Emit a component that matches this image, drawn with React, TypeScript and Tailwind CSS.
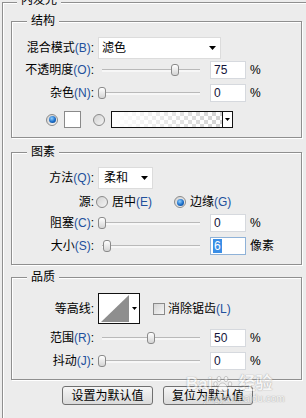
import React from "react";

const M = ({ c }: { c: string }) => <span className="text-[#22509c]">({c})</span>;

function Label({ zh, m }: { zh: string; m?: string }) {
  return (
    <div className="w-[82px] shrink-0 text-right whitespace-nowrap">
      {zh}
      {m && <M c={m} />}:
    </div>
  );
}

function Arrow() {
  return (
    <svg width="7" height="4" viewBox="0 0 7 4" className="shrink-0">
      <polygon points="0,0 7,0 3.5,4" fill="#000" />
    </svg>
  );
}

function Radio({ on }: { on?: boolean }) {
  return (
    <div className="w-[12px] h-[12px] rounded-full border border-[#8a8a8a] bg-[linear-gradient(135deg,#d2d2d2,#f4f4f4)] flex items-center justify-center shrink-0">
      {on && (
        <div className="w-[7px] h-[7px] rounded-full bg-[radial-gradient(circle_at_40%_35%,#8fd0ff,#1a6cc8_55%,#0a3a78)]" />
      )}
    </div>
  );
}

function Slider({ left }: { left: number }) {
  return (
    <div className="relative w-[112px] h-[18px] shrink-0">
      <div className="absolute left-[4px] top-[8px] w-[98px] h-[3px] border-t border-[#b9b9b9] bg-[#f7f7f7]" />
      <div
        className="absolute top-[3px] w-[8px] h-[12px] rounded-[3px] border border-[#8a8a8a] bg-[linear-gradient(#ffffff,#d4d4d4)]"
        style={{ left }}
      />
    </div>
  );
}

function Input({ v, sel }: { v: string; sel?: boolean }) {
  return (
    <div
      className={`w-[36px] h-[18px] shrink-0 bg-white border flex items-center pl-[2px] text-[#14143a] ${
        sel ? "border-[#8fb2d8]" : "border-[#d6d9de]"
      }`}
    >
      {sel ? <span className="bg-[#3a8ee6] text-white px-[1px]">{v}</span> : <span className="pl-[1px]">{v}</span>}
    </div>
  );
}

function Group({ title, className, children }: { title: string; className?: string; children: React.ReactNode }) {
  return (
    <div
      className={`relative w-[291px] border border-[#8f8f8f] shadow-[inset_1px_1px_0_#fff,1px_1px_0_#fff] ${className ?? ""}`}
    >
      <span className="absolute left-[15px] -top-[8px] px-[4px] bg-[#ececec] leading-[14px]">{title}</span>
      {children}
    </div>
  );
}

function Button({ text, w }: { text: string; w: string }) {
  return (
    <div
      className={`${w} h-[19px] rounded-[3px] border border-[#707070] bg-[linear-gradient(#f6f6f6,#dadada)] flex items-center justify-center shrink-0`}
    >
      {text}
    </div>
  );
}

export default function App() {
  return (
    <div className="relative w-[306px] h-[418px] overflow-hidden bg-[#ececec] text-black text-[12px] leading-[14px] font-['Liberation_Sans','Noto_Sans_CJK_SC',sans-serif]">
      <div className="relative ml-[2px] mt-[2px] h-[500px] w-[400px] border-t border-l border-[#8f8f8f] shadow-[inset_1px_1px_0_#fff] pl-[8px] pt-[18px]">
        <span className="absolute left-[14px] -top-[10px] px-[4px] bg-[#ececec] leading-[14px]">内发光</span>

        {/* 结构 */}
        <Group title="结构" className="pb-[9px]">
          <div className="flex items-center h-[22px] mt-[15px]">
            <Label zh="混合模式" m="B" />
            <div className="ml-[4px] w-[123px] h-[22px] bg-white border border-[#dcdcdc] flex items-center justify-between pl-[3px] pr-[4px]">
              <span>滤色</span>
              <Arrow />
            </div>
          </div>
          <div className="flex items-center h-[18px] mt-[2px]">
            <Label zh="不透明度" m="O" />
            <div className="ml-[4px] flex items-center">
              <Slider left={73} />
              <Input v="75" />
              <span className="ml-[4px]">%</span>
            </div>
          </div>
          <div className="flex items-center h-[18px] mt-[5px]">
            <Label zh="杂色" m="N" />
            <div className="ml-[4px] flex items-center">
              <Slider left={0} />
              <Input v="0" />
              <span className="ml-[4px]">%</span>
            </div>
          </div>
          <div className="flex items-center h-[17px] mt-[9px] pl-[34px]">
            <Radio on />
            <div className="ml-[6px] w-[17px] h-[17px] bg-white border border-[#8a8a8a]" />
            <div className="ml-[12px]">
              <Radio />
            </div>
            <div className="ml-[6px] w-[122px] h-[17px] border border-[#111] flex">
              <div className="flex-1 bg-[linear-gradient(to_right,#fff,rgba(255,255,255,0)),repeating-conic-gradient(#d2d2d2_0_25%,#fff_0_50%)] [background-size:100%_100%,8px_8px]" />
              <div className="w-[10px] border-l border-[#111] bg-white flex items-center justify-center">
                <svg width="5" height="3" viewBox="0 0 5 3">
                  <polygon points="0,0 5,0 2.5,3" fill="#000" />
                </svg>
              </div>
            </div>
          </div>
        </Group>

        {/* 图素 */}
        <Group title="图素" className="mt-[14px] pb-[9px]">
          <div className="flex items-center h-[22px] mt-[14px]">
            <Label zh="方法" m="Q" />
            <div className="ml-[4px] w-[55px] h-[22px] bg-white border border-[#dcdcdc] flex items-center justify-between pl-[5px] pr-[4px]">
              <span>柔和</span>
              <Arrow />
            </div>
          </div>
          <div className="flex items-center h-[16px] mt-[5px]">
            <Label zh="源" />
            <div className="ml-[2px] w-[78px] flex items-center">
              <Radio />
              <span className="ml-[4px]">
                居中
                <M c="E" />
              </span>
            </div>
            <Radio on />
            <span className="ml-[4px]">
              边缘
              <M c="G" />
            </span>
          </div>
          <div className="flex items-center h-[18px] mt-[4px]">
            <Label zh="阻塞" m="C" />
            <div className="ml-[4px] flex items-center">
              <Slider left={0} />
              <Input v="0" />
              <span className="ml-[4px]">%</span>
            </div>
          </div>
          <div className="flex items-center h-[18px] mt-[5px]">
            <Label zh="大小" m="S" />
            <div className="ml-[4px] flex items-center">
              <Slider left={5} />
              <Input v="6" sel />
              <span className="ml-[4px]">像素</span>
            </div>
          </div>
        </Group>

        {/* 品质 */}
        <Group title="品质" className="mt-[12px] pb-[9px]">
          <div className="flex items-center h-[31px] mt-[15px]">
            <Label zh="等高线" />
            <div className="ml-[4px] w-[42px] h-[31px] border border-[#111] bg-white flex">
              <svg width="30" height="29" viewBox="0 0 30 29" className="shrink-0">
                <polygon points="2,28 30,1 30,28" fill="#8e8e8e" />
              </svg>
              <div className="flex-1 flex items-center justify-center">
                <svg width="5" height="3" viewBox="0 0 5 3">
                  <polygon points="0,0 5,0 2.5,3" fill="#000" />
                </svg>
              </div>
            </div>
            <div className="ml-[13px] w-[12px] h-[12px] border border-[#8a8a8a] bg-[linear-gradient(135deg,#d4d4d4,#f6f6f6)]" />
            <span className="ml-[3px]">
              消除锯齿
              <M c="L" />
            </span>
          </div>
          <div className="flex items-center h-[18px] mt-[5px]">
            <Label zh="范围" m="R" />
            <div className="ml-[4px] flex items-center">
              <Slider left={49} />
              <Input v="50" />
              <span className="ml-[4px]">%</span>
            </div>
          </div>
          <div className="flex items-center h-[18px] mt-[5px]">
            <Label zh="抖动" m="J" />
            <div className="ml-[4px] flex items-center">
              <Slider left={0} />
              <Input v="0" />
              <span className="ml-[4px]">%</span>
            </div>
          </div>
        </Group>

        <div className="flex mt-[6px] ml-[51px]">
          <Button text="设置为默认值" w="w-[91px]" />
          <div className="ml-[10px]">
            <Button text="复位为默认值" w="w-[90px]" />
          </div>
        </div>
      </div>

      {/* watermark */}
      <div className="absolute left-[186px] top-[375px] pointer-events-none opacity-50 text-white [text-shadow:0_0_1px_#777,0_0_1px_#777]">
        <div className="flex items-end font-bold text-[17px] leading-[18px]">
          <span>Bai</span>
          <svg width="20" height="18" viewBox="0 0 20 18" className="mx-[1px]">
            <g fill="#fff" stroke="#888" strokeWidth="0.8">
              <ellipse cx="6" cy="4" rx="2" ry="2.6" />
              <ellipse cx="13" cy="4" rx="2" ry="2.6" />
              <ellipse cx="2.5" cy="9" rx="1.8" ry="2.3" />
              <ellipse cx="17" cy="9" rx="1.8" ry="2.3" />
              <path d="M9.5 8 C6 8 4 13 5 15 C6 17 13 17 14.5 15 C15.5 13 13 8 9.5 8 Z" />
            </g>
          </svg>
          <span className="ml-[4px]">经验</span>
        </div>
        <div className="ml-[18px] text-[10px] leading-[11px]">jingyan.baidu.com</div>
      </div>
    </div>
  );
}
